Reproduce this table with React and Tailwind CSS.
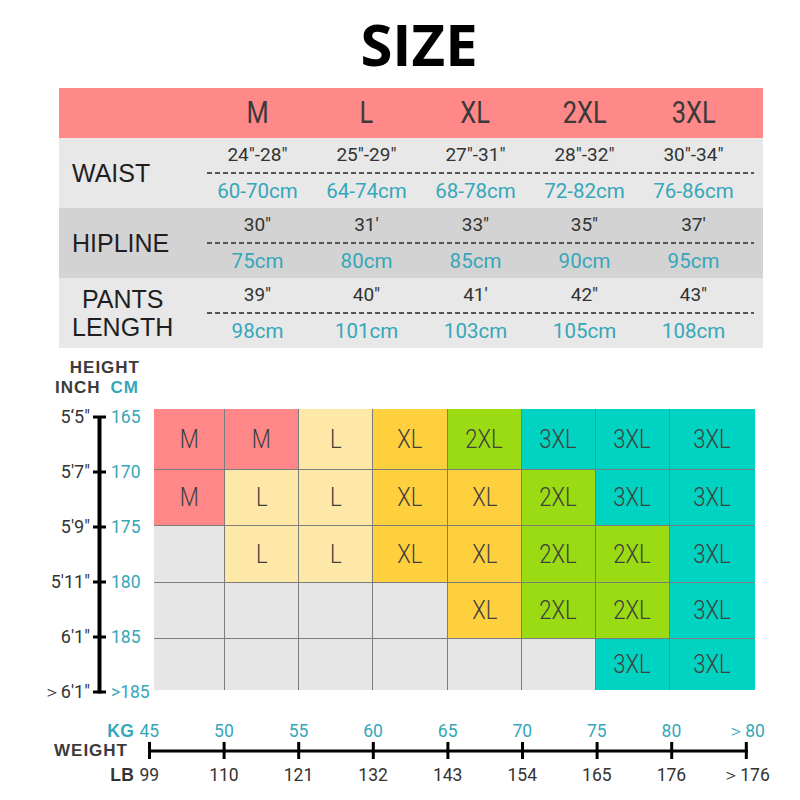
import React from 'react'

const SIZES = ['M', 'L', 'XL', '2XL', '3XL']

// measurement rows of the top table
const MEASURES = [
  {
    label: ['WAIST'],
    bg: 'bg-[#e8e8e8]',
    inch: ['24″-28″', '25″-29″', '27″-31″', '28″-32″', '30″-34″'],
    cm: ['60-70cm', '64-74cm', '68-78cm', '72-82cm', '76-86cm'],
  },
  {
    label: ['HIPLINE'],
    bg: 'bg-[#d4d3d3]',
    inch: ['30″', '31′', '33″', '35″', '37′'],
    cm: ['75cm', '80cm', '85cm', '90cm', '95cm'],
  },
  {
    label: ['PANTS', 'LENGTH'],
    bg: 'bg-[#e8e8e8]',
    inch: ['39″', '40″', '41′', '42″', '43″'],
    cm: ['98cm', '101cm', '103cm', '105cm', '108cm'],
  },
]

const CELL_BG = {
  M: 'bg-[#ff8787]',
  L: 'bg-[#fde8a8]',
  XL: 'bg-[#ffd03d]',
  '2XL': 'bg-[#9bdb14]',
  '3XL': 'bg-[#00d3c1]',
  '': 'bg-[#e6e6e6]',
}

const GRID = [
  ['M', 'M', 'L', 'XL', '2XL', '3XL', '3XL', '3XL'],
  ['M', 'L', 'L', 'XL', 'XL', '2XL', '3XL', '3XL'],
  ['', 'L', 'L', 'XL', 'XL', '2XL', '2XL', '3XL'],
  ['', '', '', '', 'XL', '2XL', '2XL', '3XL'],
  ['', '', '', '', '', '', '3XL', '3XL'],
]

const INCHES = ['5‘5"', '5′7″', '5′9″', '5′11″', '6′1″', '＞6′1″']
const CMS = ['165', '170', '175', '180', '185', '>185']
const KGS = ['45', '50', '55', '60', '65', '70', '75', '80', '＞80']
const LBS = ['99', '110', '121', '132', '143', '154', '165', '176', '＞176']

const sans = "font-['Roboto','Liberation_Sans',sans-serif]"
const label = "font-['Liberation_Sans','Arial',sans-serif]"

function MeasureRow({ row }) {
  return (
    <div className={`flex h-[70px] ${row.bg}`}>
      <div className={`w-[144px] flex items-center pl-[13px] ${label} text-[25px] leading-[28px] text-[#1f1f1f]`}>
        <div className="text-center">
          {row.label.map((l) => (
            <div key={l}>{l}</div>
          ))}
        </div>
      </div>
      <div className="flex flex-col">
        <div className={`h-[34px] grid grid-cols-[repeat(5,109px)] items-center text-center ${sans} text-[19px] text-[#333]`}>
          {row.inch.map((v, i) => (
            <div key={i}>{v}</div>
          ))}
        </div>
        <div className="ml-[4px] w-[547px] h-[2px] bg-[linear-gradient(to_right,#555_0_5px,transparent_5px_8px)] bg-[length:8px_100%]" />
        <div className={`h-[34px] grid grid-cols-[repeat(5,109px)] items-center text-center ${sans} text-[20.5px] text-[#35a7b9]`}>
          {row.cm.map((v, i) => (
            <div key={i}>{v}</div>
          ))}
        </div>
      </div>
    </div>
  )
}

function HeightAxis() {
  const ticks = [10, 65, 120, 175, 230, 285]
  return (
    <div className="mt-[9px] flex">
      <div className={`w-[93px] pr-[3px] flex flex-col gap-[35px] text-right ${sans} text-[18px] text-[#333]`}>
        {INCHES.map((v) => (
          <div key={v} className="h-[20px] leading-[20px] whitespace-nowrap">{v}</div>
        ))}
      </div>
      <svg width="13" height="295" className="shrink-0">
        <line x1="6.5" y1="10" x2="6.5" y2="286.5" stroke="#000" strokeWidth="4" />
        {ticks.map((y) => (
          <line key={y} x1="0" y1={y} x2="13" y2={y} stroke="#000" strokeWidth="3" />
        ))}
      </svg>
      <div className={`pl-[6px] flex flex-col gap-[35px] ${sans} text-[17.5px] text-[#35a7b9]`}>
        {CMS.map((v) => (
          <div key={v} className="h-[20px] leading-[20px] whitespace-nowrap -ml-[1px]">{v}</div>
        ))}
      </div>
    </div>
  )
}

function SideLabel({ children }) {
  return (
    <span className="w-0 flex justify-end whitespace-nowrap">
      <span className={`pr-[5px] ${label} font-bold tracking-[0.5px]`}>{children}</span>
    </span>
  )
}

export default function App() {
  return (
    <div className="w-[800px] h-[800px] bg-white overflow-hidden">
      <h1 className="pt-[15px] pl-[38px] text-center font-['Open_Sans',sans-serif] font-bold text-[58px] leading-none text-black">
        SIZE
      </h1>

      <div className="mt-[15px] ml-[59px] w-[704px]">
        <div className="flex h-[50px] bg-[#ff8888] items-center">
          <div className="w-[144px]" />
          <div className="grid grid-cols-[repeat(5,109px)] text-center">
            {SIZES.map((s) => (
              <div key={s} className={`${sans} text-[31px] text-[#3a3a3a]`}>
                <span className="inline-block scale-x-[0.82]">{s}</span>
              </div>
            ))}
          </div>
        </div>
        {MEASURES.map((row) => (
          <MeasureRow key={row.label[0]} row={row} />
        ))}
      </div>

      <div className="mt-[10px] flex">
        <div className="w-[154px] shrink-0 flex flex-col">
          <div className={`pr-[14px] text-right ${label} font-bold text-[17px] leading-[20px] tracking-[1px] text-[#3b3b3b]`}>
            HEIGHT
          </div>
          <div className={`pr-[15px] flex justify-end gap-[10px] ${label} font-bold text-[17px] leading-[20px] tracking-[1px]`}>
            <span className="text-[#3b3b3b]">INCH</span>
            <span className="text-[#35a7b9]">CM</span>
          </div>
          <HeightAxis />
        </div>

        <div className="mt-[51px] grid grid-cols-[70px_73px_73px_74px_73px_73px_73px_85px] grid-rows-[60px_55px_56px_55px_51px] gap-px bg-[#7c7c7c] self-start">
          {GRID.flat().map((s, i) => (
            <div key={i} className={`flex items-center justify-center ${CELL_BG[s]}`}>
              <span className={`inline-block scale-x-[0.85] ${sans} font-light text-[26px] text-[#3f3f3f]`}>{s}</span>
            </div>
          ))}
        </div>
      </div>

      <div className="mt-[19px]">
        <div className={`ml-[112px] h-[20px] grid grid-cols-[repeat(9,74.6px)] items-center ${sans} text-[17.5px] leading-[20px] text-[#35a7b9]`}>
          {KGS.map((v, i) => (
            <div key={v} className="flex justify-center">
              {i === 0 && <SideLabel>KG</SideLabel>}
              <span>{v}</span>
            </div>
          ))}
        </div>
        <div className="flex items-center h-[20px]">
          <div className={`w-[148px] pr-[20px] text-right ${label} font-bold text-[17px] tracking-[1px] text-[#3b3b3b]`}>
            WEIGHT
          </div>
          <svg width="600" height="20" className="shrink-0">
            <line x1="0" y1="10" x2="600" y2="10" stroke="#000" strokeWidth="3" />
            {KGS.map((_, i) => (
              <line key={i} x1={1.5 + i * 74.6} y1="1" x2={1.5 + i * 74.6} y2="18" stroke="#000" strokeWidth="3" />
            ))}
          </svg>
        </div>
        <div className={`mt-[4px] ml-[112px] h-[20px] grid grid-cols-[repeat(9,74.6px)] items-center ${sans} text-[17.5px] leading-[20px] text-[#333]`}>
          {LBS.map((v, i) => (
            <div key={v} className="flex justify-center">
              {i === 0 && <SideLabel>LB</SideLabel>}
              <span>{v}</span>
            </div>
          ))}
        </div>
      </div>
    </div>
  )
}
